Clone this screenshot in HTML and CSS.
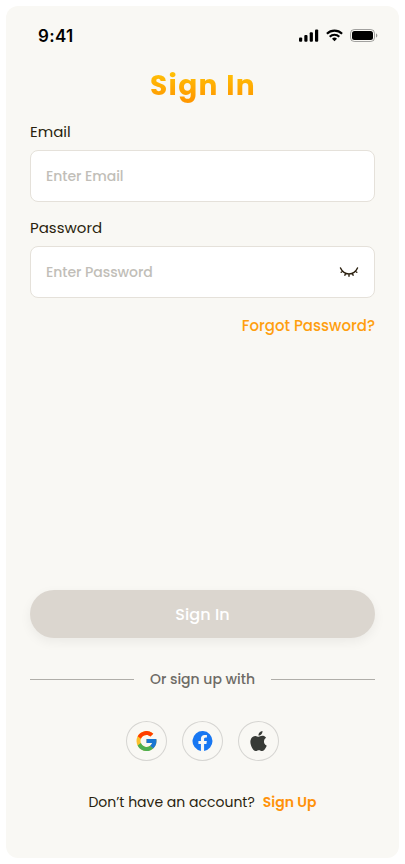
FILE: index.html
```
<!DOCTYPE html>
<html lang="en">
<head>
<meta charset="utf-8">
<title>Sign In</title>
<link rel="stylesheet" href="styles.css">
</head>
<body>
<main class="screen">
  <header class="status">
    <span class="time">9:41</span>
    <div class="indicators">
      <svg width="20" height="13" viewBox="0 0 20 13"><rect x="0" y="8.5" width="3.2" height="4.3" rx="1"/><rect x="5.3" y="6" width="3.2" height="6.8" rx="1"/><rect x="10.7" y="3.3" width="3.2" height="9.5" rx="1"/><rect x="16" y="0.5" width="3.2" height="12.3" rx="1"/></svg>
      <svg width="17" height="13" viewBox="0 0 17 13" fill="none" stroke="#000" stroke-width="2.1"><path d="M.9 4.7a10.9 10.9 0 0 1 15.2 0"/><path d="M3.7 7.7a6.9 6.9 0 0 1 9.6 0"/><path d="M8.5 12.3 6 9.8a3.6 3.6 0 0 1 5 0z" fill="#000" stroke="none"/></svg>
      <svg width="28" height="13" viewBox="0 0 28 13"><rect x=".5" y=".5" width="24" height="12" rx="3.8" fill="none" stroke="#000" stroke-opacity=".35"/><rect x="2" y="2" width="21" height="9" rx="2.5"/><path d="M26 4.5v4c.8-.3 1.3-1.1 1.3-2s-.5-1.7-1.3-2z" fill-opacity=".4"/></svg>
    </div>
  </header>
  <h1 class="title">Sign In</h1>
  <form class="form">
    <label class="label" for="email">Email</label>
    <div class="field"><input id="email" class="input" type="email" placeholder="Enter Email"></div>
    <label class="label" for="password">Password</label>
    <div class="field">
      <input id="password" class="input" type="password" placeholder="Enter Password">
      <svg width="20" height="12" viewBox="0 0 20 12" fill="none" stroke="#2a1f0e" stroke-width="1.4" stroke-linecap="round"><path d="M1.5 2C5 9.800 15 9.800 18.500 2M3.600 5 2.200 6.200M6.600 7.300 5.900 9.300M10 8v2.300M13.400 7.300l.7 2M16.400 5l1.400 1.200"/></svg>
    </div>
    <a class="forgot">Forgot Password?</a>
    <button class="submit" type="button">Sign In</button>
  </form>
  <div class="divider"><span>Or sign up with</span></div>
  <div class="socials">
    <a class="social"><svg width="21" height="20" viewBox="3 4 42 40"><path fill="#fbc02d" d="M43.600 20H24v8h11.300A12 12 0 1 1 24 12c3 0 5.800 1.200 7.900 3l5.700-5.700A20 20 0 1 0 43.600 20z"/><path fill="#ff3d00" d="m6.300 14.700 6.600 4.800A12 12 0 0 1 24 12c3 0 5.800 1.200 7.900 3l5.700-5.700A20 20 0 0 0 6.300 14.700z"/><path fill="#4caf50" d="M24 44c5.200 0 9.900-2 13.400-5.200l-6.200-5.200A12 12 0 0 1 12.700 28l-6.500 5A20 20 0 0 0 24 44z"/><path fill="#1976d2" d="M43.600 20H24v8h11.300a12 12 0 0 1-4.100 5.600l6.200 5.200C37 39.200 44 34 44 24c0-1.300-.1-2.700-.4-4z"/></svg></a>
    <a class="social"><svg width="21" height="20" viewBox="-.6 0 25.200 24"><path fill="#1877f2" d="M24 12a12 12 0 1 0-13.900 11.900v-8.400h-3V12h3V9.400c0-3 1.800-4.700 4.500-4.700 1.300 0 2.700.2 2.700.2v3h-1.500c-1.500 0-1.900.9-1.900 1.900V12h3.300l-.5 3.500h-2.800v8.400A12 12 0 0 0 24 12z"/></svg></a>
    <a class="social"><svg width="21" height="20" viewBox="-.6 0 25.200 24"><path fill="#373a36" d="M12.152 6.896c-.948 0-2.415-1.078-3.960-1.040-2.040.027-3.910 1.183-4.961 3.014-2.117 3.675-.546 9.103 1.519 12.090 1.013 1.454 2.208 3.090 3.792 3.039 1.520-.065 2.090-.987 3.935-.987 1.831 0 2.350.987 3.960.948 1.637-.026 2.676-1.480 3.676-2.948 1.156-1.688 1.636-3.325 1.662-3.415-.039-.013-3.182-1.221-3.220-4.857-.026-3.040 2.480-4.494 2.597-4.559-1.429-2.090-3.623-2.324-4.390-2.376-2-.156-3.675 1.090-4.610 1.090zM15.530 3.830c.843-1.012 1.400-2.427 1.245-3.830-1.207.052-2.662.805-3.532 1.818-.780.896-1.454 2.338-1.273 3.714 1.338.104 2.715-.688 3.559-1.701"/></svg></a>
  </div>
  <p class="signup"><span>Don’t have an account?</span><a class="signup-link">Sign Up</a></p>
</main>
</body>
</html>
```
FILE: styles.css
```
* { box-sizing: border-box; }
body { margin: 0; padding: 6px; background: #fff; font-family: Poppins, Inter, sans-serif; color: #2a1f0e; }
.screen { width: 393px; height: 852px; padding: 0 24px; border-radius: 12px; background: #f9f8f4; display: flex; flex-direction: column; white-space: nowrap; }
.status { height: 59px; margin: 0 -3px 0 8px; display: flex; align-items: center; justify-content: space-between; color: #000; }
.time { font: 600 17px/22px Inter, sans-serif; letter-spacing: .3px; }
.indicators { display: flex; align-items: center; gap: 7px; }
.title { margin: 1px auto 0; padding-left: 1px; font-size: 28px; line-height: 40px; font-weight: 700; letter-spacing: 1.400px; background: linear-gradient(#ffc107 15%, #ff9800 85%); background-clip: text; -webkit-background-clip: text; color: transparent; }
.form { display: flex; flex-direction: column; }
.label { align-self: flex-start; font-size: 15px; line-height: 24px; margin-top: 14px; margin-bottom: 6px; }
.field { display: flex; align-items: center; height: 52px; padding: 0 15px; border: 1px solid #e5e1da; border-radius: 8px; background: #fff; }
.input { flex: 1; min-width: 0; border: 0; padding: 0; outline: 0; background: none; font: 500 14px/22px Poppins, Inter, sans-serif; letter-spacing: -.05px; }
.input::placeholder { color: #c1beb8; opacity: 1; }
.forgot { align-self: flex-end; margin-top: 16px; font-size: 15px; line-height: 24px; font-weight: 500; color: #ff9f0f; }
.submit { height: 48px; margin-top: 252px; padding: 1px 0 0; border: 0; border-radius: 24px; background: #dbd6cf; box-shadow: 0 4px 12px rgba(0,0,0,.06); color: #fff; font: 500 16px/24px Poppins, Inter, sans-serif; letter-spacing: .1px; }
.divider { display: flex; align-items: center; gap: 16px; height: 24px; margin-top: 29px; font-size: 14px; font-weight: 500; color: #6e6b65; }
.divider::before, .divider::after { content: ""; flex: 1; height: 1px; background: #b0aea9; }
.socials { display: flex; justify-content: center; gap: 15px; margin-top: 30px; }
.social { width: 41px; height: 40px; border: 1px solid #d6d5d2; border-radius: 50%; display: flex; align-items: center; justify-content: center; }
.signup { display: flex; justify-content: center; gap: 8px; margin: 29px 0 0; font-size: 14px; line-height: 24px; }
.signup-link { color: #ff920a; font-weight: 600; }
```
